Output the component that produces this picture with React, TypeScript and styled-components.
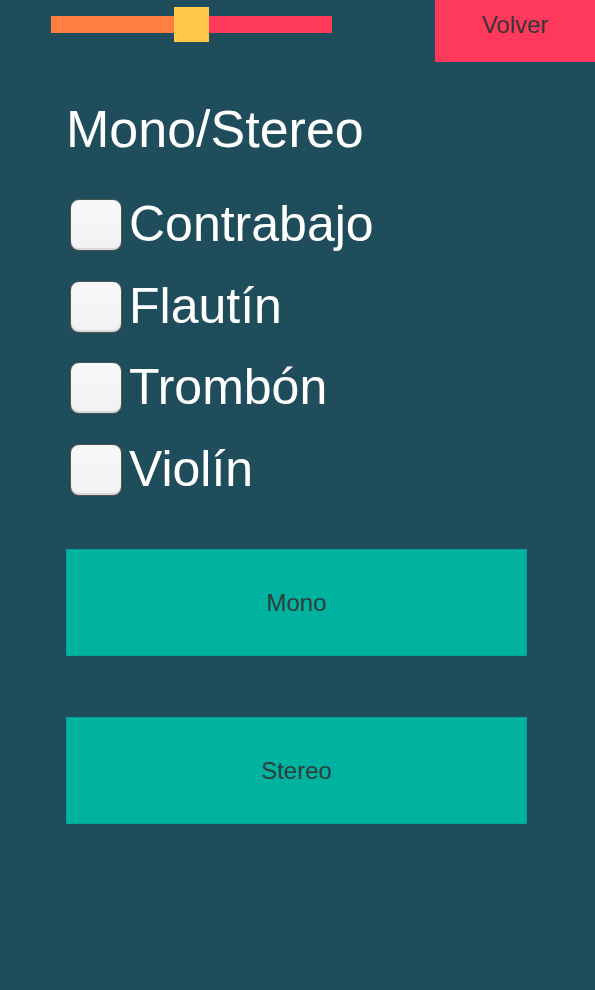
import React, { useState } from "react";
import styled, { createGlobalStyle } from "styled-components";

const GlobalStyle = createGlobalStyle`
  body {
    margin: 0;
    background: #1f4d5b;
    font-family: "Liberation Sans", Arial, sans-serif;
  }
`;

const Page = styled.div`
  width: 595px;
  min-height: 990px;
  background: #1f4d5b;
  overflow: hidden;
`;

const TopBar = styled.div`
  display: flex;
  justify-content: space-between;
  align-items: flex-start;
  height: 62px;
`;

const Slider = styled.div`
  position: relative;
  display: flex;
  align-items: center;
  width: 281px;
  height: 35px;
  margin: 7px 0 0 51px;
`;

const Track = styled.div`
  display: flex;
  width: 100%;
  height: 17px;
  background: #ff3b5c;
`;

const Fill = styled.div`
  height: 100%;
  background: #ff7f40;
`;

const Thumb = styled.div`
  position: absolute;
  top: 0;
  width: 35px;
  height: 35px;
  background: #ffc84b;
`;

const BackButton = styled.button`
  display: flex;
  align-items: center;
  justify-content: center;
  box-sizing: border-box;
  width: 160px;
  height: 62px;
  padding: 0 0 12px;
  border: none;
  background: #ff395b;
  color: #3a3438;
  font-family: "Liberation Sans", Arial, sans-serif;
  font-size: 24px;
`;

const Content = styled.div`
  display: flex;
  flex-direction: column;
  padding: 42px 0 0 66px;
`;

const Title = styled.h1`
  margin: 0 0 45px;
  font-size: 52px;
  line-height: 50px;
  font-weight: 400;
  color: #ffffff;
`;

const List = styled.div`
  display: flex;
  flex-direction: column;
  gap: 29.7px;
`;

const Row = styled.label`
  display: flex;
  align-items: center;
  gap: 7px;
  height: 52px;
  padding-left: 4px;
  cursor: pointer;
`;

const Box = styled.span<{ $checked: boolean }>`
  box-sizing: border-box;
  flex: none;
  width: 52px;
  height: 52px;
  border-radius: 9px;
  border: 1.5px solid #4e5356;
  background: linear-gradient(#f8f8f8, #f2f2f2);
  box-shadow: inset 0 -2px 0 rgba(0, 0, 0, 0.1);
  display: flex;
  align-items: center;
  justify-content: center;
  color: #333;
  font-size: 36px;
`;

const Label = styled.span`
  box-sizing: border-box;
  height: 52px;
  padding-bottom: 2px;
  display: flex;
  align-items: center;
  font-size: 50px;
  line-height: 52px;
  color: #ffffff;
`;

const Action = styled.button<{ $top: number }>`
  box-sizing: border-box;
  width: 461px;
  height: 107px;
  margin-top: ${(p) => p.$top}px;
  border: 1px solid rgba(0, 0, 0, 0.07);
  background: #00b3a0;
  color: #303c3b;
  font-family: "Liberation Sans", Arial, sans-serif;
  font-size: 24px;
`;

const instruments = ["Contrabajo", "Flautín", "Trombón", "Violín"];

export default function App() {
  const [checked, setChecked] = useState<Record<string, boolean>>({});
  const volume = 123;

  return (
    <Page>
      <GlobalStyle />
      <TopBar>
        <Slider>
          <Track>
            <Fill style={{ width: volume }} />
          </Track>
          <Thumb style={{ left: volume }} />
        </Slider>
        <BackButton>Volver</BackButton>
      </TopBar>
      <Content>
        <Title>Mono/Stereo</Title>
        <List>
          {instruments.map((name) => (
            <Row
              key={name}
              onClick={() => setChecked((c) => ({ ...c, [name]: !c[name] }))}
            >
              <Box $checked={!!checked[name]}>{checked[name] ? "✓" : ""}</Box>
              <Label>{name}</Label>
            </Row>
          ))}
        </List>
        <Action $top={53}>Mono</Action>
        <Action $top={61}>Stereo</Action>
      </Content>
    </Page>
  );
}
